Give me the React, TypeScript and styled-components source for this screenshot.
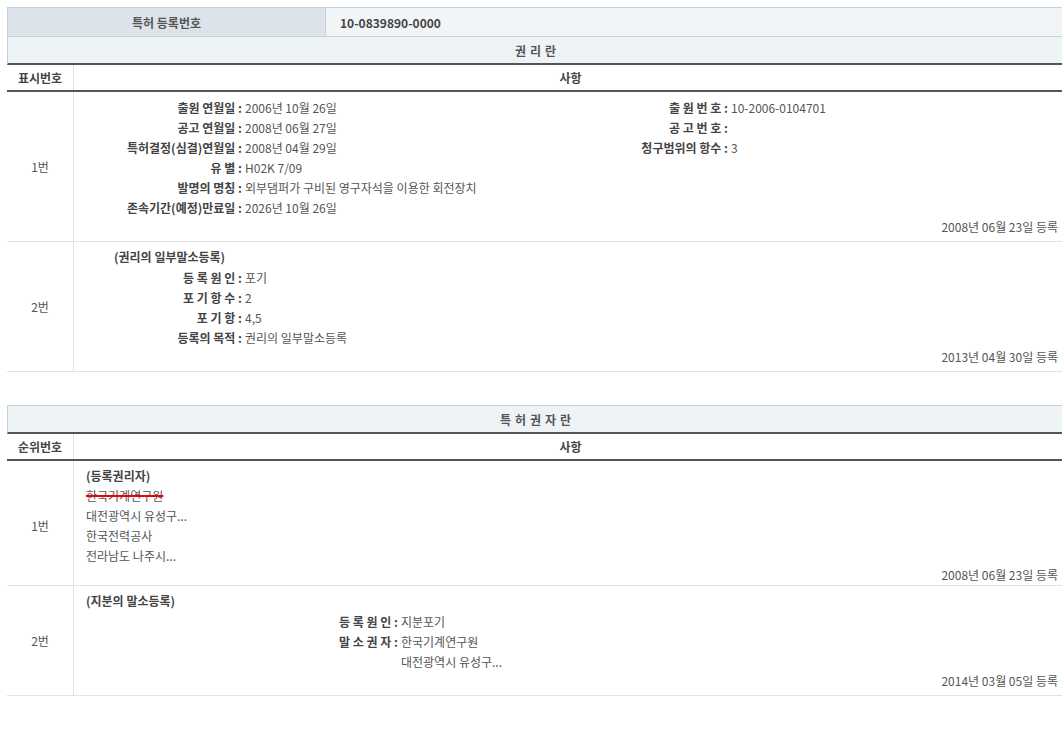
import React from "react";
import styled, { createGlobalStyle } from "styled-components";

const Global = createGlobalStyle`
  body { margin: 0; background: #fff; font-family: "Noto Sans CJK KR", "Liberation Sans", sans-serif; font-size: 12px; color: #444; }
`;

const Page = styled.div`
  padding: 7px 0 30px 7px;
  width: 1062px;
  box-sizing: border-box;
  overflow: hidden;
`;

const Table = styled.div<{ $gap?: number }>`
  width: 1060px;
  margin-top: ${(p) => p.$gap ?? 0}px;
  border-top: 1px solid #c9d1d8;
`;

const TopRow = styled.div`
  display: grid;
  grid-template-columns: 318px 1fr;
  height: 28px;
  border-bottom: 1px solid #c9d1d8;
  border-left: 1px solid #c9d1d8;
`;

const TopLabel = styled.div`
  background: #dde3ea;
  display: flex;
  align-items: center;
  justify-content: center;
  font-weight: bold;
  color: #555;
  border-right: 1px solid #c9d1d8;
`;

const TopValue = styled.div`
  background: #f2f5f8;
  display: flex;
  align-items: center;
  padding-left: 14px;
  font-weight: bold;
  color: #444;
`;

const Section = styled.div`
  height: 26px;
  background: #eef3f6;
  border-left: 1px solid #c9d1d8;
  border-bottom: 2px solid #555;
  display: flex;
  align-items: center;
  justify-content: center;
  font-weight: bold;
  color: #555;
  letter-spacing: 4px;
`;

const Row = styled.div<{ $h: number; $head?: boolean }>`
  display: grid;
  grid-template-columns: 67px 1fr;
  height: ${(p) => p.$h}px;
  border-bottom: ${(p) => (p.$head ? "2px solid #555" : "1px solid #e2e2e2")};
`;

const NumCell = styled.div<{ $head?: boolean }>`
  display: flex;
  align-items: center;
  justify-content: center;
  border-right: 1px solid #e2e2e2;
  font-weight: ${(p) => (p.$head ? "bold" : "normal")};
  color: ${(p) => (p.$head ? "#444" : "#555")};
`;

const HeadCell = styled.div`
  display: flex;
  align-items: center;
  justify-content: center;
  font-weight: bold;
  color: #444;
`;

const Body = styled.div`
  display: flex;
  flex-direction: column;
  padding: 5px 8px 6px 12px;
`;

const Cols = styled.div`
  display: grid;
  grid-template-columns: 480px auto;
`;

const Grid = styled.div<{ $label: number }>`
  display: grid;
  grid-template-columns: ${(p) => p.$label}px auto;
  grid-auto-rows: 20px;
  align-content: start;
  align-items: center;
  column-gap: 3px;
`;

const Label = styled.div`
  text-align: right;
  font-weight: bold;
  color: #444;
  white-space: pre;
`;

const Value = styled.div`
  color: #555;
  white-space: nowrap;
`;

const Title = styled.div<{ $indent: number }>`
  font-weight: bold;
  color: #444;
  padding-left: ${(p) => p.$indent}px;
  height: 20px;
  line-height: 20px;
`;

const Line = styled.div<{ $strike?: boolean }>`
  height: 20px;
  line-height: 20px;
  color: #555;
  span {
    text-decoration: ${(p) => (p.$strike ? "line-through" : "none")};
    text-decoration-color: #e00;
    text-decoration-thickness: 2px;
  }
`;

const DateLine = styled.div`
  margin-top: auto;
  text-align: right;
  color: #555;
  padding-right: 1px;
`;

type KV = [string, string];

const Pairs = ({ items, label }: { items: KV[]; label: number }) => (
  <Grid $label={label}>
    {items.map(([k, v], i) => (
      <React.Fragment key={i}>
        <Label>{k ? k + " :" : ""}</Label>
        <Value>{v}</Value>
      </React.Fragment>
    ))}
  </Grid>
);

export default function App() {
  return (
    <Page>
      <Global />
      <Table>
        <TopRow>
          <TopLabel>특허 등록번호</TopLabel>
          <TopValue>10-0839890-0000</TopValue>
        </TopRow>
        <Section>권리란</Section>
        <Row $h={25} $head>
          <NumCell $head>표시번호</NumCell>
          <HeadCell>사항</HeadCell>
        </Row>
        <Row $h={149}>
          <NumCell>1번</NumCell>
          <Body>
            <Cols>
              <Pairs
                label={156}
                items={[
                  ["출원 연월일", "2006년 10월 26일"],
                  ["공고 연월일", "2008년 06월 27일"],
                  ["특허결정(심결)연월일", "2008년 04월 29일"],
                  ["유 별", "H02K 7/09"],
                  ["발명의 명칭", "외부댐퍼가 구비된 영구자석을 이용한 회전장치"],
                  ["존속기간(예정)만료일", "2026년 10월 26일"],
                ]}
              />
              <Pairs
                label={162}
                items={[
                  ["출 원 번 호", "10-2006-0104701"],
                  ["공 고 번 호", ""],
                  ["청구범위의 항수", "3"],
                ]}
              />
            </Cols>
            <DateLine>2008년 06월 23일 등록</DateLine>
          </Body>
        </Row>
        <Row $h={129}>
          <NumCell>2번</NumCell>
          <Body>
            <Title $indent={28}>(권리의 일부말소등록)</Title>
            <Pairs
              label={156}
              items={[
                ["등 록 원 인", "포기"],
                ["포 기 항 수", "2"],
                ["포 기 항", "4,5"],
                ["등록의 목적", "권리의 일부말소등록"],
              ]}
            />
            <DateLine>2013년 04월 30일 등록</DateLine>
          </Body>
        </Row>
      </Table>

      <Table $gap={33}>
        <Section>특허권자란</Section>
        <Row $h={25} $head>
          <NumCell $head>순위번호</NumCell>
          <HeadCell>사항</HeadCell>
        </Row>
        <Row $h={124}>
          <NumCell>1번</NumCell>
          <Body>
            <Title $indent={0}>(등록권리자)</Title>
            <Line $strike><span>한국기계연구원</span></Line>
            <Line>대전광역시 유성구...</Line>
            <Line>한국전력공사</Line>
            <Line>전라남도 나주시...</Line>
            <DateLine>2008년 06월 23일 등록</DateLine>
          </Body>
        </Row>
        <Row $h={109}>
          <NumCell>2번</NumCell>
          <Body>
            <Title $indent={0}>(지분의 말소등록)</Title>
            <Pairs
              label={312}
              items={[
                ["등 록 원 인", "지분포기"],
                ["말 소 권 자", "한국기계연구원"],
                ["", "대전광역시 유성구..."],
              ]}
            />
            <DateLine>2014년 03월 05일 등록</DateLine>
          </Body>
        </Row>
      </Table>
    </Page>
  );
}
